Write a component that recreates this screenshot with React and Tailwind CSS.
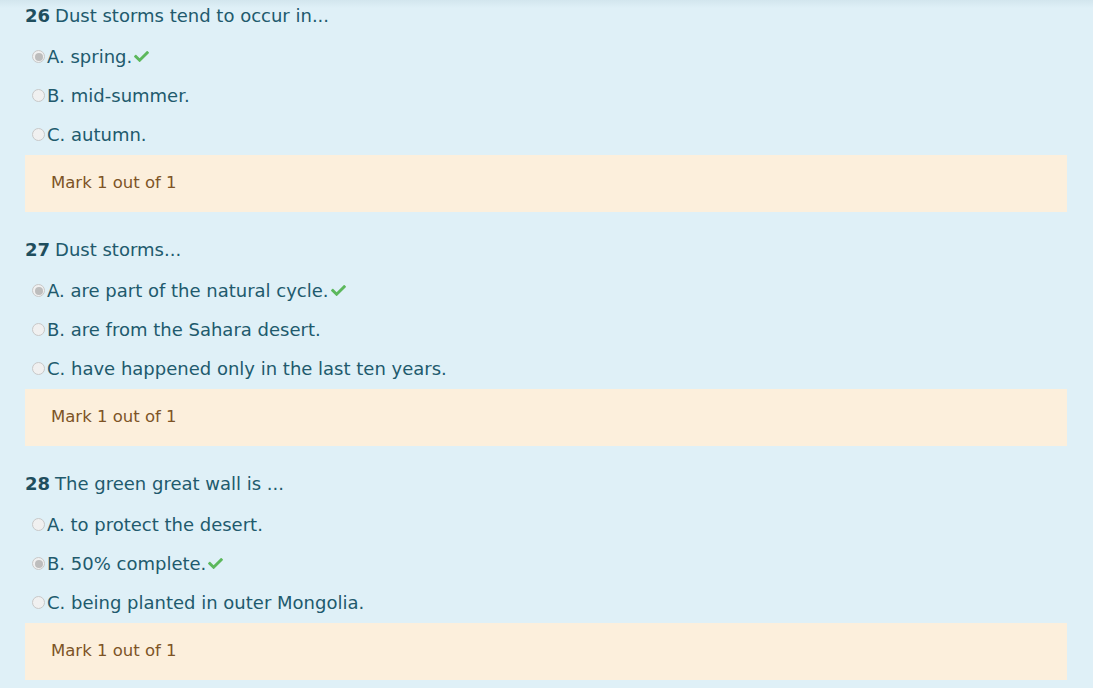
import React from "react";

const questions = [
  {
    num: 26,
    text: "Dust storms tend to occur in...",
    options: ["A. spring.", "B. mid-summer.", "C. autumn."],
    correct: 0,
  },
  {
    num: 27,
    text: "Dust storms...",
    options: [
      "A. are part of the natural cycle.",
      "B. are from the Sahara desert.",
      "C. have happened only in the last ten years.",
    ],
    correct: 0,
  },
  {
    num: 28,
    text: "The green great wall is ...",
    options: [
      "A. to protect the desert.",
      "B. 50% complete.",
      "C. being planted in outer Mongolia.",
    ],
    correct: 1,
  },
];

function Check() {
  return (
    <svg viewBox="0 0 512 512" className="w-[17px] h-[15px] ml-[1px]" fill="#5cb85c">
      <path d="M173.9 439.4l-166.4-166.4c-10-10-10-26.2 0-36.2l36.2-36.2c10-10 26.2-10 36.2 0L192 312.7 432.1 72.6c10-10 26.2-10 36.2 0l36.2 36.2c10 10 10 26.2 0 36.2l-294.4 294.4c-10 10-26.2 10-36.2 0z" />
    </svg>
  );
}

function Radio({ checked }) {
  return (
    <span className="w-[13px] h-[13px] rounded-full border border-[#c8c8c8] bg-[#f0f0f0] flex items-center justify-center shrink-0">
      {checked && <span className="w-[8px] h-[8px] rounded-full bg-[#bdbdbd]" />}
    </span>
  );
}

function Question({ q }) {
  return (
    <div className="flex flex-col">
      <div className="h-[30px] flex items-center text-[18px] text-[#215a6d]">
        <span className="font-bold text-[#1f4e5e] mr-[5px]">{q.num}</span>
        {q.text}
      </div>
      <div className="flex flex-col pt-[7px] pl-[7px]">
        {q.options.map((o, i) => (
          <div key={i} className="h-[39px] flex items-center text-[18px] text-[#215a6d]">
            <Radio checked={i === q.correct} />
            <span className="ml-[2px]">{o}</span>
            {i === q.correct && <Check />}
          </div>
        ))}
      </div>
      <div className="mt-[1px] h-[57px] bg-[#fcefdc] flex items-center pl-[26px] text-[16.5px] text-[#7d5426]">
        Mark 1 out of 1
      </div>
    </div>
  );
}

export default function App() {
  return (
    <div
      className="w-[1093px] h-[688px] overflow-hidden bg-[#dff0f7] relative"
      style={{ fontFamily: "'DejaVu Sans', 'Open Sans', sans-serif" }}
    >
      <div className="absolute top-0 left-0 right-0 h-[8px] bg-gradient-to-b from-[#d3e6ee] to-transparent" />
      <div className="flex flex-col gap-[22px] pl-[25px] pr-[26px] pt-0">
        {questions.map((q) => (
          <Question key={q.num} q={q} />
        ))}
      </div>
    </div>
  );
}
